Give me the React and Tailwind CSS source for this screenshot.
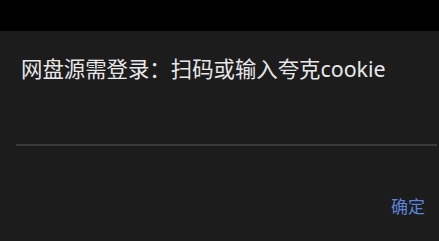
export default function App() {
  return (
    <div
      className="w-[439px] h-[241px] bg-black flex flex-col overflow-hidden"
      style={{ fontFamily: '"Noto Sans", "Noto Sans CJK SC", sans-serif' }}
    >
      <div className="h-[31px] shrink-0" />
      <div className="flex-1 bg-[#1c1c1c] flex flex-col">
        <div className="pl-[21px] pt-[23px] text-[21.4px] leading-[30px] text-[#e8e8e8]">
          网盘源需登录：扫码或输入夸克cookie
        </div>
        <div className="ml-[16px] mr-[2px] mt-[60px] h-[2px] bg-[#3a3a3a]" />
        <div className="flex justify-end pr-[14px] mt-[49px]">
          <button className="text-[17px] leading-[24px] text-[#5d83d8]">
            确定
          </button>
        </div>
      </div>
    </div>
  );
}
